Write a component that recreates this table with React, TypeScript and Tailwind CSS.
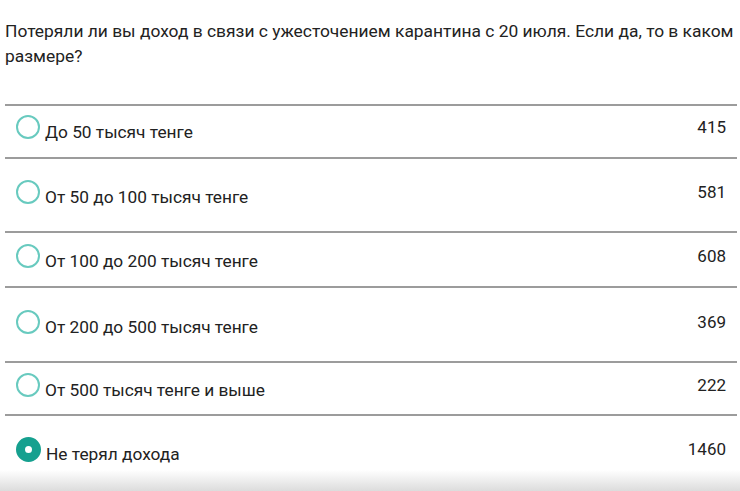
import React from 'react';

const rows = [
    {label: 'До 50 тысяч тенге', count: 415, h: 'h-[53px]', pt: 'pt-[9px]'},
    {label: 'От 50 до 100 тысяч тенге', count: 581, h: 'h-[74px]', pt: 'pt-[21px]'},
    {label: 'От 100 до 200 тысяч тенге', count: 608, h: 'h-[55px]', pt: 'pt-[11px]'},
    {label: 'От 200 до 500 тысяч тенге', count: 369, h: 'h-[75px]', pt: 'pt-[22px]'},
    {label: 'От 500 тысяч тенге и выше', count: 222, h: 'h-[53px]', pt: 'pt-[10px]'},
    {label: 'Не терял дохода', count: 1460, h: 'h-[56px]', pt: 'pt-[21px]', checked: true},
];

const Radio = ({checked}: {checked?: boolean}) => (
    checked ? (
        <div className="w-[25px] h-[25px] rounded-full border-[9px] border-[#16a08f] bg-white shrink-0"/>
    ) : (
        <div className="w-[24px] h-[24px] rounded-full border-2 border-[#68cabf] bg-white shrink-0"/>
    )
);

const App = () => {
    return (
        <div className="w-[740px] h-[491px] bg-white overflow-hidden text-[#222]"
             style={{fontFamily: 'Roboto, "Noto Sans", sans-serif'}}>
            <div className="pl-[5px] pr-[3px]">
                <p className="pt-[19px] mb-[35px] text-[17.4px] leading-[25px]">
                    Потеряли ли вы доход в связи с ужесточением карантина с 20 июля. Если да, то в каком размере?
                </p>
                {rows.map((row) => (
                    <div key={row.label}
                         className={`flex items-start border-t-2 border-[#9c9c9c] pl-[11px] pr-[11px] ${row.h} ${row.pt}`}>
                        <Radio checked={row.checked}/>
                        <span className="ml-[5px] mt-[7px] text-[17.3px] leading-[20px]">{row.label}</span>
                        <span className="ml-auto mt-[2px] text-[17px] leading-[20px]">{row.count}</span>
                    </div>
                ))}
            </div>
            <div className="h-[21px] bg-gradient-to-b from-white to-[#dcdcdc]"/>
        </div>
    );
};

export default App;
